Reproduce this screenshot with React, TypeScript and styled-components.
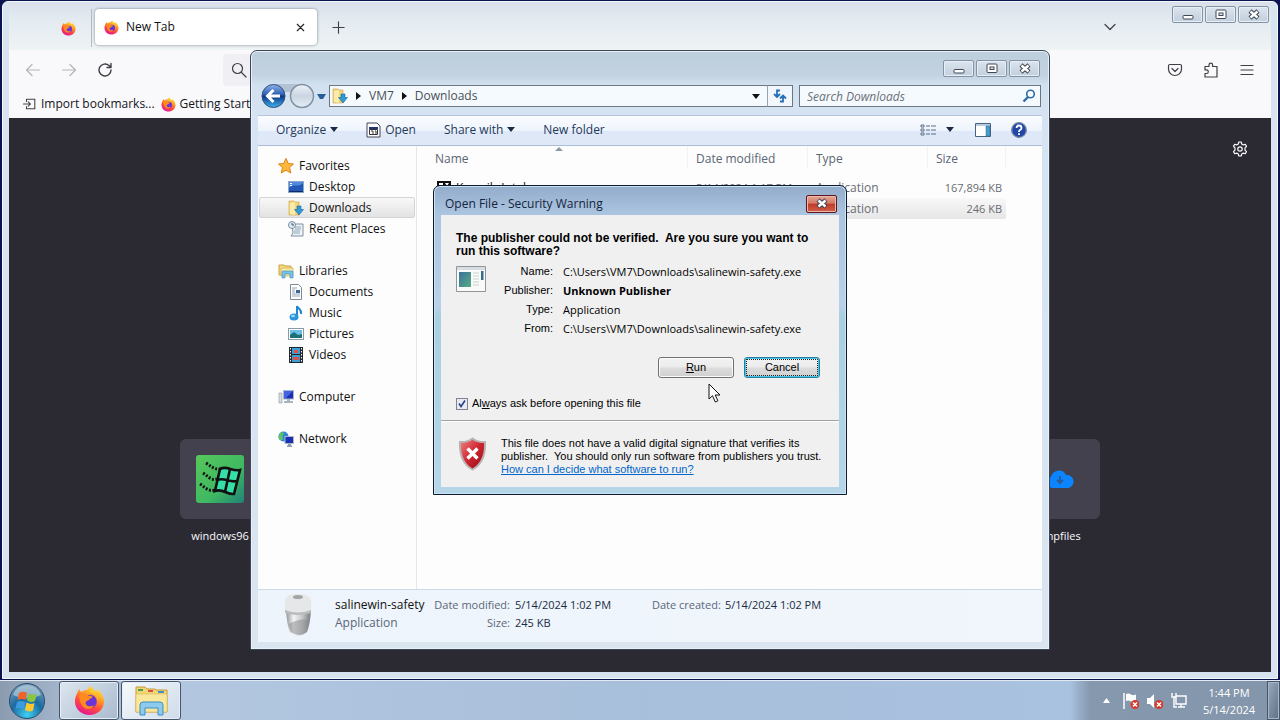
import React from 'react';
import styled, { createGlobalStyle, css } from 'styled-components';

const ui = '"Open Sans", "Noto Sans", sans-serif';
const classic = '"Liberation Sans", Arial, sans-serif';

const Global = createGlobalStyle`
  * { box-sizing: border-box; }
  body { margin: 0; overflow: hidden; font: 12px/16px ${ui}; color: #111; }
  button { font: inherit; color: inherit; padding: 0; border: 0; background: none; display: flex; align-items: center; }
  svg { display: block; flex: none; }
`;

const Desktop = styled.div`
  height: 100vh;
  display: flex;
  flex-direction: column;
  background: #0a1450;
`;
const Workspace = styled.main`
  position: relative;
  flex: 1;
  min-height: 0;
`;

/* ---------- browser ---------- */
const BrowserWindow = styled.section`
  position: absolute;
  inset: 1px 2px 1px 2px;
  display: flex;
  flex-direction: column;
  padding: 0 6px 6px;
  border: 1px solid #f4f8fd;
  border-radius: 6px 6px 0 0;
  background: #d8e3f0;
`;
const TabStrip = styled.header`
  display: flex;
  height: 48px;
  padding-top: 7px;
  background: linear-gradient(#d9e0ea, #e4ebf1 40%, #eef3f4);
`;
const PinnedTab = styled.button`
  width: 83px;
  height: 38px;
  padding-left: 52px;
  border-right: 1px solid #b4bac4;
`;
const Tab = styled.div`
  display: flex;
  align-items: center;
  gap: 7px;
  width: 222px;
  height: 36px;
  margin-left: 3px;
  padding: 0 10px 0 9px;
  border-radius: 4px;
  background: #fff;
  box-shadow: 0 0 3px #77808c;
`;
const Grow = styled.span`
  flex: 1;
`;
const NewTabButton = styled.button`
  height: 36px;
  margin-left: 14px;
`;
const TabListButton = styled.button`
  height: 36px;
  margin-right: 54px;
`;
const CaptionButtons = styled.div<{ $lift?: boolean }>`
  display: flex;
  gap: 2px;
  ${p => p.$lift && 'margin: -3px 2px 0 0;'}
`;
const CaptionButton = styled.button`
  justify-content: center;
  width: 31px;
  height: 17px;
  border: 1px solid #8492a4;
  border-radius: 2px;
  background: linear-gradient(#dbe4ee, #c2cfdd);
  box-shadow: inset 0 0 0 1px #e6eef6;
`;
const BrowserTools = styled.div`
  background: #f9f9fb;
  color: #222;
`;
const NavRow = styled.div`
  display: flex;
  align-items: center;
  height: 40px;
  padding: 0 16px;
  gap: 20px;
`;
const UrlBar = styled.div`
  flex: 1;
  height: 32px;
  margin: 0 112px 0 90px;
  padding: 8px;
  border-radius: 4px;
  background: #f0f0f4;
`;
const Bookmarks = styled.div`
  display: flex;
  gap: 6px;
  height: 28px;
  padding: 0 14px;
`;
const Bookmark = styled.a`
  display: flex;
  align-items: center;
  gap: 4px;
  color: #15141a;
  text-decoration: none;
  white-space: nowrap;
`;
const NewTabPage = styled.div`
  flex: 1;
  display: flex;
  flex-direction: column;
  background: #2b2a33;
  color: #fbfbfe;
`;
const SettingsButton = styled.button`
  align-self: flex-end;
  margin: 23px 23px 0 0;
`;
const TopSites = styled.div`
  display: flex;
  justify-content: space-between;
  width: 100%;
  max-width: 960px;
  margin: 282px auto 0;
`;
const Site = styled.a`
  display: flex;
  flex-direction: column;
  align-items: center;
  width: 120px;
  gap: 9px;
  color: inherit;
  font-size: 11px;
  text-decoration: none;
`;
const SiteTile = styled.span`
  display: flex;
  align-items: center;
  justify-content: center;
  width: 80px;
  height: 80px;
  border-radius: 6px;
  background: #42414d;
`;

/* ---------- file explorer ---------- */
const ExplorerWindow = styled.section`
  position: absolute;
  left: 250px;
  top: 50px;
  width: 800px;
  height: 600px;
  display: flex;
  flex-direction: column;
  padding: 0 7px 7px;
  border: 1px solid #3c4656;
  border-radius: 7px 7px 0 0;
  background: linear-gradient(#bccfdc, #c3d2e0 24px, #d2e1ef 34px, #d6e3f2 64px, #dae5f0);
  box-shadow: inset 0 0 0 1px #e8f1f8;
`;
const ExplorerTitle = styled.header`
  display: flex;
  justify-content: flex-end;
  height: 33px;
  padding: 9px 2px 0 0;
`;
const AddressRow = styled.div`
  display: flex;
  align-items: center;
  height: 24px;
  padding-right: 1px;
`;
const AddressBox = styled.div`
  flex: 1;
  display: flex;
  align-items: center;
  gap: 8px;
  height: 22px;
  margin-left: 1px;
  padding: 0 7px 0 2px;
  border: 1px solid #6d7784;
  border-right-color: #98a4b2;
  background: #f5fafe;
  color: #4a4f57;
`;
const RefreshButton = styled.button`
  width: 25px;
  height: 22px;
  justify-content: center;
  border: 1px solid #6d7784;
  border-left: 0;
  background: #f1f7fc;
`;
const SearchBox = styled.label`
  display: flex;
  align-items: center;
  width: 242px;
  height: 22px;
  margin-left: 6px;
  padding: 0 4px 0 7px;
  border: 1px solid #6d7784;
  background: #f5fafe;
`;
const SearchInput = styled.input`
  flex: 1;
  min-width: 0;
  padding: 0;
  border: 0;
  background: none;
  font: italic 12px ${ui};
  &::placeholder { color: #6b7078; opacity: 1; }
`;
const CommandBar = styled.div`
  display: flex;
  align-items: center;
  height: 31px;
  margin-top: 7px;
  padding: 0 15px 2px 18px;
  border-top: 1px solid #b3c4dc;
  border-bottom: 1px solid #a9bdd8;
  background: linear-gradient(#fbfdff, #eef4fd 50%, #dfe8f8 52%, #dfe9f8);
  color: #1e395b;
`;
const Command = styled.button<{ $space?: number }>`
  gap: 4px;
  margin-right: ${p => p.$space ?? 28}px;
`;
const ExplorerBody = styled.div`
  flex: 1;
  display: flex;
  min-height: 0;
  background: #fdfdfe;
`;
const Tree = styled.nav`
  width: 159px;
  padding: 9px 1px 0;
  border-right: 1px solid #e3e8ee;
`;
const TreeGroup = styled.div`
  margin-bottom: 21px;
`;
const TreeItem = styled.button<{ $child?: boolean; $selected?: boolean }>`
  width: 100%;
  height: 21px;
  gap: 5px;
  padding-left: ${p => (p.$child ? 28 : 18)}px;
  border: 1px solid transparent;
  ${p => p.$selected && css`
    border-color: #d4d4d4;
    border-radius: 2px;
    background: linear-gradient(#f8f8f8, #e3e3e3);
  `}
`;
const FilePane = styled.div`
  flex: 1;
  padding-left: 17px;
`;
const FileTable = styled.table`
  position: relative;
  width: 572px;
  table-layout: fixed;
  border-collapse: separate;
  border-spacing: 0;
  color: #6a6d72;
`;
const HeadCell = styled.th<{ $width: number }>`
  width: ${p => p.$width}px;
  height: 31px;
  padding: 0 0 5px 8px;
  text-align: left;
  font-weight: 400;
  color: #5b6571;
  background: linear-gradient(#f0f2f5, #f0f2f5) right 0 top / 1px 22px no-repeat;
  &:first-child { padding-left: 1px; }
`;
const Cell = styled.td<{ $right?: boolean; $dark?: boolean; $numeric?: boolean }>`
  height: 21px;
  padding: 0 4px 0 8px;
  overflow: hidden;
  white-space: nowrap;
  font-size: ${p => (p.$numeric ? 11 : 12)}px;
  text-align: ${p => (p.$right ? 'right' : 'left')};
  color: ${p => (p.$dark ? '#111' : 'inherit')};
  &:first-child { padding-left: 2px; }
`;
const FileRow = styled.tr<{ $selected?: boolean }>`
  ${p => p.$selected && css`
    td { background: linear-gradient(#f8f8f8, #e6e6e6); }
    td:last-child { border-radius: 0 2px 2px 0; }
  `}
`;
const FileName = styled.span`
  display: flex;
  align-items: center;
  gap: 4px;
`;
const SortMark = styled.span`
  position: absolute;
  top: 1px;
  left: 121px;
`;
const DetailsPane = styled.footer`
  display: flex;
  height: 53px;
  gap: 19px;
  padding: 3px 0 0 22px;
  border-top: 1px solid #cbd9e8;
  background: linear-gradient(90deg, #edf4fb, #f1f6fc);
`;
const DetailsGrid = styled.dl`
  display: grid;
  grid-template-columns: 92px 78px 132px 68px 120px;
  grid-auto-rows: 18px;
  column-gap: 5px;
  margin: 3px 0 0;
  font-size: 11px;
  line-height: 18px;
  white-space: nowrap;
`;
const DetailLabel = styled.dt`
  text-align: right;
  color: #5a6779;
`;
const DetailValue = styled.dd`
  margin: 0;
  color: #1a2c44;
`;
const DetailTitle = styled.dt`
  font-size: 12px;
  color: #111;
`;
const DetailKind = styled(DetailTitle)`
  color: #5a6779;
`;

/* ---------- security dialog ---------- */
const Dialog = styled.section`
  position: absolute;
  left: 433px;
  top: 185px;
  width: 414px;
  height: 310px;
  display: flex;
  flex-direction: column;
  padding: 0 7px 7px;
  border: 1px solid #10182c;
  border-radius: 7px 7px 0 0;
  background: linear-gradient(#93acca, #abc4e0 28px, #b9d1ea 120px, #a9d0e0 130px, #b5d6e8);
  box-shadow: inset 0 0 0 1px #c8e6f6;
  font-family: ${classic};
  font-size: 11px;
  line-height: 13px;
  color: #000;
`;
const DialogTitle = styled.header`
  display: flex;
  align-items: center;
  justify-content: space-between;
  height: 29px;
  padding: 6px 2px 0 4px;
  font: 12px/16px ${ui};
  color: #14243c;
`;
const CloseButton = styled.button`
  justify-content: center;
  width: 31px;
  height: 18px;
  border: 1px solid #5a1720;
  border-radius: 2px;
  background: linear-gradient(#e5a596, #d57a68 45%, #bf3a28 50%, #d4604a);
  box-shadow: inset 0 0 0 1px #eeb8ac;
`;
const DialogBody = styled.div`
  flex: 1;
  display: flex;
  flex-direction: column;
  background: #f0f0f0;
`;
const Question = styled.h1`
  margin: 17px 24px 4px 15px;
  font-size: 12px;
  line-height: 13px;
  white-space: pre-wrap;
`;
const Facts = styled.div`
  display: flex;
  padding-left: 15px;
`;
const FactList = styled.dl`
  display: grid;
  grid-template-columns: 66px auto;
  grid-auto-rows: 19px;
  column-gap: 10px;
  margin: 0;
  line-height: 19px;
`;
const FactName = styled.dt`
  text-align: right;
`;
const FactValue = styled.dd<{ $strong?: boolean }>`
  margin: 0;
  font-family: ${ui};
  font-weight: ${p => (p.$strong ? 700 : 400)};
`;
const DialogActions = styled.div`
  display: flex;
  justify-content: flex-end;
  gap: 10px;
  margin: 19px 19px 0 0;
`;
const PushButton = styled.button<{ $focused?: boolean }>`
  justify-content: center;
  width: 76px;
  height: 21px;
  border: 1px solid #707070;
  border-radius: 3px;
  background: linear-gradient(#f3f3f3, #ebebeb 48%, #dddddd 52%, #cfcfcf);
  box-shadow: inset 0 0 0 1px #fbfbfb;
  ${p => p.$focused && css`
    border-color: #2a7f9e;
    box-shadow: inset 0 0 0 1px #48c6ea;
    outline: 1px dotted #222;
    outline-offset: -3px;
  `}
`;
const AskLabel = styled.label`
  display: flex;
  align-items: center;
  gap: 4px;
  height: 13px;
  margin: 19px 0 10px 15px;
`;
const AskBox = styled.input`
  appearance: none;
  width: 12px;
  height: 12px;
  margin: 0;
  border: 1px solid #7d848c;
  background: #e8ecf2;
  &:checked {
    background: url("data:image/svg+xml,%3Csvg xmlns='http://www.w3.org/2000/svg' viewBox='0 0 10 10'%3E%3Cpath d='M2 4.500l2 3L8 1.500' fill='none' stroke='%232b3f8c' stroke-width='1.600'/%3E%3C/svg%3E") #e8ecf2;
  }
`;
const Warning = styled.div`
  flex: 1;
  display: flex;
  gap: 14px;
  padding: 16px 0 0 17px;
  border-top: 1px solid #a0a0a0;
  box-shadow: inset 0 1px #fff;
`;
const WarningText = styled.p`
  margin: 0;
  white-space: pre;
`;
const HelpLink = styled.a`
  color: #0066cc;
`;
const Pointer = styled.svg`
  position: absolute;
  left: 708px;
  top: 383px;
`;

/* ---------- taskbar ---------- */
const Taskbar = styled.footer`
  display: flex;
  height: 40px;
  border-top: 1px solid #e1eaf3;
  background: linear-gradient(90deg, #8b9bb0, #a3b5ca 60px, #b2c6df 180px, #a8bfdb 50%, #a9c2df 1070px, #8598ae 1090px, #8496ab);
`;
const StartButton = styled.button`
  width: 59px;
  padding-left: 8px;
`;
const TaskButton = styled.button<{ $active?: boolean }>`
  justify-content: center;
  width: 60px;
  height: 39px;
  margin-right: 2px;
  border: 1px solid #46566c;
  border-radius: 3px;
  background: ${p => (p.$active ? 'linear-gradient(135deg,#f5f9fc,#cfdce9)' : 'linear-gradient(135deg,#dde6ef,#a9bacd)')};
  box-shadow: inset 0 0 0 1px #e5eef6;
`;
const Tray = styled.div`
  display: flex;
  align-items: center;
  margin-left: auto;
`;
const TrayIcons = styled.div`
  display: flex;
  align-items: center;
  gap: 8px;
  padding-right: 4px;
`;
const Clock = styled.time`
  width: 76px;
  text-align: center;
  font-size: 11px;
  line-height: 17px;
  color: #fff;
`;
const ShowDesktop = styled.button`
  width: 13px;
  height: 39px;
  border: 1px solid #46556a;
  background: linear-gradient(110deg, #9aa9bb, #5e6f86);
  box-shadow: inset 0 0 0 1px #a7b5c6;
`;

/* ---------- icons ---------- */
const Firefox = ({ size }: { size: number }) => {
  const id = 'fx' + size;
  return (
    <svg width={size} height={size} viewBox="0 0 32 32">
      <defs>
        <linearGradient id={id} x1="0.8" y1="0" x2="0.3" y2="1">
          <stop offset="0" stopColor="#fff04a" /><stop offset="0.35" stopColor="#ffa024" />
          <stop offset="0.65" stopColor="#ff4a3c" /><stop offset="1" stopColor="#e3149a" />
        </linearGradient>
      </defs>
      <path d="M3 9c1-3 2-4 3-5 0 2 1 3 2 3 2-1 3-2 6-2 1-2 2-3 4-4 0 3 3 4 5 6 1-1 1-2 1-3 5 4 7 9 7 13 0 8-7 14-15 14S1 25 1 17c0-3 1-6 2-8z" fill={`url(#${id})`} />
      <circle cx="16.500" cy="17" r="7" fill="#6a35d8" />
      <path d="M5 11c3-3 8-3 10 0 2 0 4 0 4 1 0 2-4 2-4 4-2 0-3 1-3 3 1 3 5 4 9 2-3 5-10 5-13 0-2-3-2-7-3-10z" fill="#ff8a1f" />
      <path d="M17 8c6 0 8 5 7 10 2-6-1-11-6-15-2 2-2 4-1 5z" fill="#ffc928" />
    </svg>
  );
};
const Down = ({ color = '#1b2c48' }: { color?: string }) => (
  <svg width="8" height="5" viewBox="0 0 8 5"><path d="M0 0h8L4 5z" fill={color} /></svg>
);
const Crumb = () => <svg width="5" height="8" viewBox="0 0 5 8"><path d="M0 0l5 4-5 4z" fill="#111" /></svg>;
const XGlyph = () => (
  <svg width="14" height="11" viewBox="0 0 14 11">
    <path d="M3 2l8 7M11 2L3 9" stroke="#3f4754" strokeWidth="4.500" />
    <path d="M3.500 2.500l7 6M10.500 2.500l-7 6" stroke="#fff" strokeWidth="2.400" />
  </svg>
);
const Caption = ({ lift }: { lift?: boolean }) => (
  <CaptionButtons $lift={lift}>
    <CaptionButton aria-label="Minimize">
      <svg width="12" height="11" viewBox="0 0 12 11"><rect x="1" y="6.500" width="10" height="3.500" rx="1" fill="#fff" stroke="#3f4754" /></svg>
    </CaptionButton>
    <CaptionButton aria-label="Maximize">
      <svg width="12" height="11" viewBox="0 0 12 11"><rect x="1" y="1" width="10" height="8.500" rx="1" fill="#fff" stroke="#3f4754" /><rect x="4" y="4" width="4" height="2.500" fill="#dce6ef" stroke="#3f4754" /></svg>
    </CaptionButton>
    <CaptionButton aria-label="Close"><XGlyph /></CaptionButton>
  </CaptionButtons>
);
const Line = ({ d, size = 16, color = '#3f3f46', width = 1.2 }: { d: string; size?: number; color?: string; width?: number }) => (
  <svg width={size} height={size} viewBox="0 0 16 16" fill="none" stroke={color} strokeWidth={width} strokeLinecap="round" strokeLinejoin="round"><path d={d} /></svg>
);
const DownloadsIcon = () => (
  <svg width="16" height="16" viewBox="0 0 16 16">
    <path d="M1 1h5l1 1h4v13H1z" fill="#f3d67c" stroke="#c9a142" strokeWidth=".6" /><path d="M2 3l5-1v13l-5-1z" fill="#fbeaa8" />
    <path d="M9 6h4v3.500h2.500l-4.500 5.500-4.500-5.500H9z" fill="#2e9bd4" stroke="#18649c" strokeWidth=".6" />
  </svg>
);
const treeIcons: Record<string, React.ReactNode> = {
  Favorites: <path d="M8 0.500l2.300 5 5.200.5-4 3.500 1.300 5.500L8 12.200 3.200 15l1.300-5.500-4-3.500 5.200-.5z" fill="#fdb83c" stroke="#d98417" />,
  Desktop: <><rect x=".5" y="2.500" width="15" height="11" fill="#2458b8" stroke="#8fa6c4" /><path d="M1 9c5-5 9 0 14-5V3H1z" fill="#4f8ade" /><path d="M1 12h14v1H1z" fill="#0d2a6a" /><path d="M2 4h2v1H2zm0 2h2v1H2z" fill="#fff" /></>,
  'Recent Places': <><path d="M4 3h11v12H3l2-3z" fill="#eef3f7" stroke="#7e8e9e" /><path d="M7 6h6M7 8h6M6 10h6M6 12h6" stroke="#8fa4b8" /><circle cx="4" cy="4" r="3.500" fill="#dcebf5" stroke="#7e8e9e" /><path d="M4 2v2h2" fill="none" stroke="#456" /></>,
  Libraries: <><path d="M1 2h5l1 1h6v9H1z" fill="#f5dc85" stroke="#c9a142" /><path d="M3 5h12v8H3z" fill="#f9e9a5" stroke="#c9a142" strokeWidth=".6" /><path d="M4 15V9q0-1 1-1h9q1 0 1 1v6h-3v-4H7v4z" fill="#77c0e8" stroke="#3b8fc0" strokeWidth=".6" /></>,
  Documents: <><path d="M2.500.5h8l3 3v12h-11z" fill="#fff" stroke="#7d8b99" /><path d="M4 4h5M4 6h3M4 8h3M4 10h8M4 12h8" stroke="#8fa6bd" /><path d="M8 6h4v3H8z" fill="#3d668f" /></>,
  Music: <><path d="M9 12V1c1 3 5 3 4 8" fill="none" stroke="#1f86cf" strokeWidth="2" /><ellipse cx="6" cy="12" rx="4.500" ry="3.500" fill="#2a94dc" /><ellipse cx="5" cy="11" rx="2" ry="1.200" fill="#9ad6f7" /></>,
  Pictures: <><rect x=".5" y="2.500" width="15" height="11" fill="#fff" stroke="#8b98a6" /><path d="M2 4h12v8H2z" fill="#6bc0e6" /><path d="M2 12V9l4-3 4 3 4-1v4z" fill="#1e6f78" /></>,
  Videos: <><path d="M1 0h14v16H1z" fill="#1e2630" /><path d="M4 1h8v6H4zM4 8h8v7H4z" fill="#3d9fd4" /><path d="M6 3h4v3H6zM5 10h6v3H5z" fill="#d6524a" /><path d="M2.500 1v14M13.500 1v14" stroke="#fff" strokeDasharray="1.500 1.500" /></>,
  Computer: <><path d="M1 4h3v10H1z" fill="#d7dde3" stroke="#8794a2" strokeWidth=".6" /><rect x="5.500" y="1.500" width="10" height="8.500" fill="#1a2fb4" stroke="#aeb9c8" /><path d="M6 2h9L8 9H6z" fill="#4362e6" /><path d="M9 10h3v2h3v2H6v-2h3z" fill="#a9b4c1" /></>,
  Network: <><circle cx="5.500" cy="5.500" r="5" fill="#2d86cf" /><path d="M2 2c3-2 5 0 3 2s2 4-1 5-4-3-3-4z" fill="#5fc26a" /><rect x="7" y="5.500" width="8.500" height="7" fill="#1a2fb4" stroke="#aeb9c8" /><path d="M10 13h3v1.500h1V16H9v-1.500h1z" fill="#8f9cab" /></>,
};
const TreeIcon = ({ name }: { name: string }) =>
  name === 'Downloads' ? <DownloadsIcon /> : <svg width="16" height="16" viewBox="0 0 16 16">{treeIcons[name]}</svg>;

const tree = [
  ['Favorites', 'Desktop', 'Downloads', 'Recent Places'],
  ['Libraries', 'Documents', 'Music', 'Pictures', 'Videos'],
  ['Computer'],
  ['Network'],
];

const Browser = () => (
  <BrowserWindow>
    <TabStrip>
      <PinnedTab aria-label="Pinned tab"><Firefox size={15} /></PinnedTab>
      <Tab>
        <Firefox size={15} /><span>New Tab</span><Grow />
        <button aria-label="Close tab"><Line d="M4 4l8 8M12 4l-8 8" size={13} color="#222" width={1.4} /></button>
      </Tab>
      <NewTabButton aria-label="New tab"><Line d="M8 2v12M2 8h12" size={15} /></NewTabButton>
      <Grow />
      <TabListButton aria-label="List tabs"><Line d="M3 5.500l5 5 5-5" /></TabListButton>
      <Caption lift />
    </TabStrip>
    <BrowserTools>
      <NavRow>
        <button aria-label="Back"><Line d="M1.500 8h13M7 2.500L1.500 8 7 13.500" color="#b5b5ba" /></button>
        <button aria-label="Forward"><Line d="M1.500 8h13M9 2.500L14.500 8 9 13.500" color="#b5b5ba" /></button>
        <button aria-label="Reload"><Line d="M14 8a6 6 0 1 1-2-4.500l1.500 1.500M14 1.500V5.500h-4" width={1.4} /></button>
        <UrlBar><Line d="M11.500 6.500a5 5 0 1 1-10 0 5 5 0 0 1 10 0M10 10l5 5" /></UrlBar>
        <button aria-label="Pocket"><Line d="M3 2.500h10q1.500 0 1.500 1.500v3a6.500 6.500 0 0 1-13 0V4Q1.500 2.500 3 2.500zM5 6.500l3 3 3-3" /></button>
        <button aria-label="Extensions"><Line d="M2 4.500h4V3a1.800 1.800 0 0 1 3.600 0v1.500H14V15H2v-3.500h1.500a1.800 1.800 0 0 0 0-3.600H2z" /></button>
        <button aria-label="Menu"><Line d="M2 3.500h12M2 8h12M2 12.500h12" /></button>
      </NavRow>
      <Bookmarks>
        <Bookmark href="#import"><Line d="M4 5V2.500h9.500v11H4V11M0.500 8h8M6 5.500L8.500 8 6 10.500" size={14} />Import bookmarks...</Bookmark>
        <Bookmark href="#start"><Firefox size={15} />Getting Started</Bookmark>
      </Bookmarks>
    </BrowserTools>
    <NewTabPage>
      <SettingsButton aria-label="Settings">
        <Line color="#fbfbfe" d="M6.800 1h2.400l.5 2 1.600.9 2-.6 1.200 2.100-1.500 1.500v2.200l1.500 1.500-1.200 2.100-2-.6-1.600.9-.5 2H6.800l-.5-2-1.600-.9-2 .6-1.200-2.100L3 9.100V6.900L1.500 5.400l1.200-2.100 2 .6L6.300 3zM10.200 8a2.200 2.200 0 1 1-4.400 0 2.200 2.200 0 0 1 4.400 0" />
      </SettingsButton>
      <TopSites>
        <Site href="#windows96">
          <SiteTile>
            <svg width="48" height="48" viewBox="0 0 48 48">
              <defs><linearGradient id="w96" x2="1" y2="1"><stop offset="0" stopColor="#58c75c" /><stop offset=".6" stopColor="#3fb862" /><stop offset="1" stopColor="#1f8276" /></linearGradient></defs>
              <rect width="48" height="48" rx="3" fill="url(#w96)" />
              <path d="M24 14c7-4 12 3 20 1l-6 24c-7 1-11-6-19-3z" fill="#35dfa8" stroke="#111" strokeWidth="2.600" />
              <path d="M34 14l-5 23M21 25c8-3 12 3 20 1" fill="none" stroke="#111" strokeWidth="2.600" />
              <path d="M10 8c5 3 8 7 14 6M7 18c5 3 8 8 14 6M4 29c5 3 8 8 15 6" fill="none" stroke="#111" strokeWidth="3" strokeDasharray="2 1.600" />
            </svg>
          </SiteTile>
          windows96
        </Site>
        <Site href="#tmpfiles">
          <SiteTile>
            <svg width="28" height="20" viewBox="0 0 28 20"><path d="M6 19a6 6 0 0 1-1-11A8 8 0 0 1 20 6a6.500 6.500 0 0 1 2 13z" fill="#0a84ff" /><path d="M14 7v7m-3-3l3 3 3-3" fill="none" stroke="#2c5b9c" strokeWidth="2" /></svg>
          </SiteTile>
          tmpfiles
        </Site>
      </TopSites>
    </NewTabPage>
  </BrowserWindow>
);

const Explorer = () => (
  <ExplorerWindow>
    <ExplorerTitle><Caption /></ExplorerTitle>
    <AddressRow>
      <svg width="70" height="28" viewBox="-1 0 70 28">
        <defs>
          <linearGradient id="bk" x2="0" y2="1"><stop offset="0" stopColor="#8fb3e6" /><stop offset=".45" stopColor="#2a5cb4" /><stop offset=".5" stopColor="#0b3185" /><stop offset="1" stopColor="#3fb6ec" /></linearGradient>
          <linearGradient id="fw" x2="0" y2="1"><stop offset="0" stopColor="#eef3f8" /><stop offset=".5" stopColor="#c9d5e2" /><stop offset="1" stopColor="#e5eef6" /></linearGradient>
        </defs>
        <path d="M15 2h29v8H15z" fill="#b2c2d2" />
        <circle cx="14.500" cy="14" r="11.500" fill="url(#bk)" stroke="#34507e" /><path d="M21 14H9.500m5-6l-6 6 6 6" fill="none" stroke="#fff" strokeWidth="3" />
        <circle cx="43" cy="14" r="11.500" fill="url(#fw)" stroke="#8391a2" strokeWidth="1.500" />
        <path d="M58 12h9l-3 5h-3z" fill="#265e9a" />
      </svg>
      <AddressBox>
        <DownloadsIcon /><Crumb /><span>VM7</span><Crumb /><span>Downloads</span><Grow /><Down color="#111" />
      </AddressBox>
      <RefreshButton aria-label="Refresh">
        <svg width="16" height="14" viewBox="0 0 16 14" fill="none" stroke="#2670b8" strokeWidth="1.800"><path d="M8 1.500H5V7M2 5l3 3 3-3M8 12.500h3V7M8 9.500l3-3 3 3" /></svg>
      </RefreshButton>
      <SearchBox>
        <SearchInput aria-label="Search Downloads" placeholder="Search Downloads" />
        <svg width="14" height="14" viewBox="0 0 14 14" fill="none" stroke="#2d6ca8"><circle cx="8.500" cy="5" r="3.800" strokeWidth="1.600" /><path d="M6 8l-4.500 4.500" strokeWidth="2.400" /></svg>
      </SearchBox>
    </AddressRow>
    <CommandBar>
      <Command>Organize <Down /></Command>
      <Command>
        <svg width="15" height="16" viewBox="0 0 15 16"><path d="M1 1h10l3 3v11H1z" fill="#fff" stroke="#445" /><path d="M3 5h9v2H3z" fill="#1f3476" /><path d="M3.500 7.500h8v5h-8z" fill="#fff" stroke="#333" /><path d="M5 9h2v3M9 9h1v3" stroke="#333" fill="none" /></svg>
        Open
      </Command>
      <Command>Share with <Down /></Command>
      <Command>New folder</Command>
      <Grow />
      <Command $space={21} aria-label="Change view">
        <svg width="22" height="12" viewBox="0 0 22 12"><path d="M1 1h3v2H1zM1 5h3v2H1zM1 9h3v2H1z" fill="#fff" stroke="#5a6c86" /><path d="M6 2h4M6 6h4M6 10h4M11 2h5M11 6h5M11 10h5" stroke="#5a6c86" strokeWidth="1.200" /></svg>
        <Down />
      </Command>
      <Command $space={20} aria-label="Preview pane">
        <svg width="16" height="14" viewBox="0 0 16 14"><path d="M.5.5h15v13H.5z" fill="#fff" stroke="#48627e" /><path d="M1 1h14v2H1z" fill="#b9cde0" /><path d="M11 3h4v10h-4z" fill="#4a9bd0" stroke="#2c6a9a" strokeWidth=".5" /></svg>
      </Command>
      <Command $space={0} aria-label="Help">
        <svg width="16" height="16" viewBox="0 0 16 16"><circle cx="8" cy="8" r="7.300" fill="#2445a8" stroke="#7585a4" strokeWidth="1.300" /><path d="M5.500 6q0-2.500 2.500-2.500T10.500 6q0 1.300-1.500 2-1 .5-1 1.500v.5M8 11.200v1.800" fill="none" stroke="#fff" strokeWidth="1.800" /></svg>
      </Command>
    </CommandBar>
    <ExplorerBody>
      <Tree>
        {tree.map(group => (
          <TreeGroup key={group[0]}>
            {group.map((name, i) => (
              <TreeItem key={name} $child={i > 0} $selected={name === 'Downloads'}><TreeIcon name={name} />{name}</TreeItem>
            ))}
          </TreeGroup>
        ))}
      </Tree>
      <FilePane>
        <FileTable>
          <thead>
            <tr>
              <HeadCell $width={254}>Name<SortMark><svg width="8" height="4" viewBox="0 0 8 4"><path d="M0 4l4-4 4 4z" fill="#8b98a6" /></svg></SortMark></HeadCell>
              <HeadCell $width={120}>Date modified</HeadCell>
              <HeadCell $width={120}>Type</HeadCell>
              <HeadCell $width={78}>Size</HeadCell>
            </tr>
          </thead>
          <tbody>
            <FileRow>
              <Cell $dark><FileName><svg width="16" height="16" viewBox="0 0 16 16"><path d="M1 1h14v14H1z" fill="#111" /><path d="M3 3h4v2H3zM9 3h4l-2 3z" fill="#fff" /></svg>Kurmik_Intel.exe</FileName></Cell>
              <Cell $numeric>5/14/2024 1:17 PM</Cell><Cell>Application</Cell><Cell $right $numeric>167,894 KB</Cell>
            </FileRow>
            <FileRow $selected>
              <Cell $dark /><Cell /><Cell>Application</Cell><Cell $right $numeric>246 KB</Cell>
            </FileRow>
          </tbody>
        </FileTable>
      </FilePane>
    </ExplorerBody>
    <DetailsPane>
      <svg width="36" height="46" viewBox="0 0 36 46">
        <defs><linearGradient id="shaker"><stop offset="0" stopColor="#8f9193" /><stop offset=".3" stopColor="#f3f3f3" /><stop offset=".65" stopColor="#c6c7c9" /><stop offset="1" stopColor="#77797c" /></linearGradient></defs>
        <path d="M6 16h25q-1 17-4 23-8 7-17 0-3-6-4-23z" fill="url(#shaker)" />
        <path d="M9 31q10-6 20-4l-2 12q-8 6-16 0z" fill="#85878a" opacity=".5" />
        <path d="M5 7Q6 1 18 1t13 6v11q-12 5-26 0z" fill="#e6e7e8" /><path d="M5 17q13 5 26 0v3q-13 4-26 0z" fill="#b9bbbd" />
        <ellipse cx="18" cy="4" rx="5" ry="2" fill="#a3a5a7" />
      </svg>
      <DetailsGrid>
        <DetailTitle>salinewin-safety</DetailTitle>
        <DetailLabel>Date modified:</DetailLabel><DetailValue>5/14/2024 1:02 PM</DetailValue>
        <DetailLabel>Date created:</DetailLabel><DetailValue>5/14/2024 1:02 PM</DetailValue>
        <DetailKind>Application</DetailKind>
        <DetailLabel>Size:</DetailLabel><DetailValue>245 KB</DetailValue>
      </DetailsGrid>
    </DetailsPane>
  </ExplorerWindow>
);

const SecurityDialog = () => (
  <Dialog role="dialog" aria-label="Open File - Security Warning">
    <DialogTitle>
      Open File - Security Warning
      <CloseButton aria-label="Close"><XGlyph /></CloseButton>
    </DialogTitle>
    <DialogBody>
      <Question>{'The publisher could not be verified.  Are you sure you want to run this software?'}</Question>
      <Facts>
        <svg width="31" height="31" viewBox="0 0 31 31">
          <defs><linearGradient id="app" x2="1" y2="1"><stop offset="0" stopColor="#3f6f9c" /><stop offset="1" stopColor="#54ad84" /></linearGradient></defs>
          <path d="M.5 4.500h29v25H.5z" fill="#fafafa" stroke="#8f9599" /><path d="M1 5h28v3H1z" fill="#d8dde2" />
          <path d="M3 10h12v15H3z" fill="url(#app)" /><path d="M17 11h6M17 14h6M17 17h6M17 20h6M17 23h6" stroke="#c9d3cd" /><path d="M25 9h2.500v9H25z" fill="#386b8e" />
        </svg>
        <FactList>
          <FactName>Name:</FactName><FactValue>C:\Users\VM7\Downloads\salinewin-safety.exe</FactValue>
          <FactName>Publisher:</FactName><FactValue $strong>Unknown Publisher</FactValue>
          <FactName>Type:</FactName><FactValue>Application</FactValue>
          <FactName>From:</FactName><FactValue>C:\Users\VM7\Downloads\salinewin-safety.exe</FactValue>
        </FactList>
      </Facts>
      <DialogActions>
        <PushButton><span><u>R</u>un</span></PushButton>
        <PushButton $focused>Cancel</PushButton>
      </DialogActions>
      <AskLabel><AskBox type="checkbox" defaultChecked /><span>Al<u>w</u>ays ask before opening this file</span></AskLabel>
      <Warning>
        <svg width="29" height="34" viewBox="0 0 29 34">
          <defs><linearGradient id="sh" x2="1" y2="1"><stop offset="0" stopColor="#f08a86" /><stop offset=".5" stopColor="#cf2530" /><stop offset="1" stopColor="#8f0c18" /></linearGradient></defs>
          <path d="M14.500 1.500q5 4 12.500 3.500 1 20-12.500 27.500Q1 25 2 5q7.500.5 12.500-3.500z" fill="url(#sh)" stroke="#b9b3b3" strokeWidth="2" />
          <path d="M9.500 11.500l10 10M19.500 11.500l-10 10" stroke="#fff" strokeWidth="3.500" />
        </svg>
        <WarningText>
          {'This file does not have a valid digital signature that verifies its\npublisher.  You should only run software from publishers you trust.\n'}
          <HelpLink href="#help">How can I decide what software to run?</HelpLink>
        </WarningText>
      </Warning>
    </DialogBody>
  </Dialog>
);

const Badge = () => <><circle cx="12" cy="11.500" r="4.500" fill="#d63a2c" /><path d="M10 9.500l4 4M14 9.500l-4 4" stroke="#fff" strokeWidth="1.500" /></>;

export default function App() {
  return (
    <Desktop>
      <Global />
      <Workspace>
        <Browser />
        <Explorer />
        <SecurityDialog />
        <Pointer width="14" height="21" viewBox="0 0 14 21" aria-hidden><path d="M1 1v15l3.500-3.300L7.300 19l2.600-1.200L7.200 12H12z" fill="#fff" stroke="#111" /></Pointer>
      </Workspace>
      <Taskbar>
        <StartButton aria-label="Start">
          <svg width="38" height="38" viewBox="0 0 38 38">
            <defs><radialGradient id="orb" cx=".5" cy=".9" r=".9"><stop offset="0" stopColor="#3fd0f2" /><stop offset=".5" stopColor="#1a6ba2" /><stop offset="1" stopColor="#7fa0b8" /></radialGradient></defs>
            <circle cx="19" cy="19" r="17.500" fill="url(#orb)" stroke="#284d6e" />
            <path d="M5 13Q9 3 19 3t14 10q-14 7-28 0z" fill="#cfdee8" opacity=".55" />
            <path d="M11 11q4-2.500 8 0l-1.500 7q-4-2-8 0z" fill="#f0642c" /><path d="M20.500 11.500q4 2.500 8.500 0l-2 7.500q-4 2-8-.5z" fill="#8cc63f" />
            <path d="M9 20q4-2 8 0l-1.500 7q-4-2-8 0z" fill="#3e9be0" /><path d="M18.500 20.500q4 2.500 8 .5l-1.500 7.500q-4 2-8-.5z" fill="#fdc82f" />
          </svg>
        </StartButton>
        <TaskButton aria-label="Firefox"><Firefox size={31} /></TaskButton>
        <TaskButton $active aria-label="Explorer">
          <svg width="33" height="31" viewBox="0 0 33 31">
            <path d="M1 2h9l2 2h8l1 1h11v22H1z" fill="#f2d774" stroke="#c49a38" /><path d="M3 4h5v2H3z" fill="#4b9e4e" /><path d="M13 5h5v2h-5z" fill="#d9503f" /><path d="M23 6h6v2h-6z" fill="#3f8fc9" />
            <path d="M1 9h31v18H1z" fill="#f9e89c" stroke="#d9b75a" strokeWidth=".6" />
            <path d="M5 30V20q0-3 3-3h17q3 0 3 3v10h-5v-7H10v7z" fill="#8ccbee" stroke="#3f8ebf" />
          </svg>
        </TaskButton>
        <Tray>
          <TrayIcons>
            <svg width="14" height="5" viewBox="-2 0 14 5"><path d="M0 5h7L3.500 0z" fill="#fff" /></svg>
            <svg width="16" height="16" viewBox="0 0 16 16"><path d="M1 0v16" stroke="#fff" strokeWidth="1.500" /><path d="M3 1q3-1 5 .5t5 0V9q-3 1-5-.5T3 8z" fill="#fff" /><Badge /></svg>
            <svg width="16" height="16" viewBox="0 0 16 16"><path d="M0 5h3l4-4v14l-4-4H0z" fill="#fff" /><Badge /></svg>
            <svg width="16" height="16" viewBox="0 0 16 16" fill="none" stroke="#fff" strokeWidth="1.400"><path d="M5 3h10v8H5zM7 14h7M10 11v3M1 0v4h4V0M3 4v10h3" /></svg>
          </TrayIcons>
          <Clock>1:44 PM<br />5/14/2024</Clock>
          <ShowDesktop aria-label="Show desktop" />
        </Tray>
      </Taskbar>
    </Desktop>
  );
}
